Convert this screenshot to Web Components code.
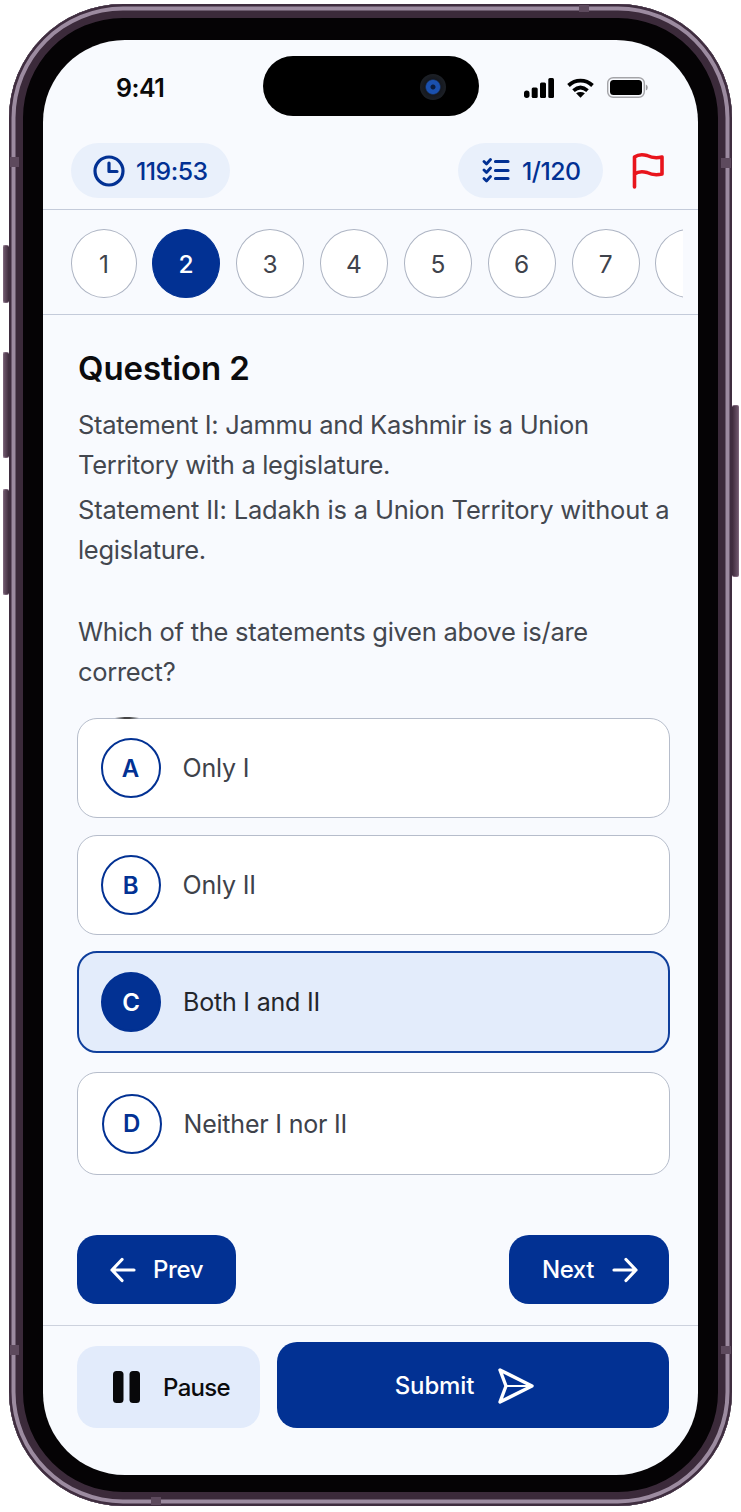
<!DOCTYPE html>
<html><head><meta charset="utf-8"><style>
html,body{margin:0;background:#fff;font-family:Inter,"Liberation Sans",sans-serif}
body{width:741px;height:1512px;overflow:hidden}
</style></head><body>
<phone-frame>
  <status-bar></status-bar>
  <quiz-header></quiz-header>
  <question-strip></question-strip>
  <question-body>
    <h-q slot="title">Question 2</h-q>
    <p-line slot="s1">Statement I: Jammu and Kashmir is a Union Territory with a legislature.</p-line>
    <p-line slot="s2" style="margin-top:5px"><span style="letter-spacing:-.17px">Statement II: Ladakh is a Union Territory without a</span> legislature.</p-line>
    <p-line slot="s3" style="margin-top:42px"><span style="letter-spacing:-.27px">Which of the statements given above is/are</span> correct?</p-line>
  </question-body>
  <option-list>
    <quiz-option letter="A" h="100">Only I</quiz-option>
    <quiz-option letter="B" h="100" style="margin-top:17px">Only II</quiz-option>
    <quiz-option letter="C" h="102" selected style="margin-top:16px">Both I and II</quiz-option>
    <quiz-option letter="D" h="103" style="margin-top:19px;--pad:23.500px">Neither I nor II</quiz-option>
  </option-list>
  <nav-row></nav-row>
  <action-bar></action-bar>
</phone-frame>
<script>
function el(name,css,html,init){
  customElements.define(name,class extends HTMLElement{
    constructor(){super();this.attachShadow({mode:'open'}).innerHTML='<style>'+css+'</style>'+(typeof html==='function'?html(this):html);}
    connectedCallback(){init&&init(this)}
  });
}
const BLUE='#023193';
el('phone-frame',`
:host{display:block;position:absolute;left:0;top:0;width:741px;height:1512px}
.frame{position:absolute;left:9px;top:4px;width:723px;height:1502px;box-sizing:border-box;border-radius:114px;background:#050305;
  box-shadow:inset 0 0 0 2.500px #3f2d3f,inset 0 0 0 6.500px #9c8ba0,inset 0 0 0 14px #3b2a3a;padding:36px 34px 31px 34px}
.screen{position:relative;width:655px;height:1435px;border-radius:82px;background:#f8fafe;overflow:hidden;display:flex;flex-direction:column}
.btn{position:absolute;box-sizing:border-box;background:linear-gradient(90deg,#6b5469,#3d2a3b);border-radius:2px;border:1px solid #7b6479;border-right:0}
.mark{position:absolute;background:#5d4a5d}
.island{position:absolute;left:220px;top:16px;width:216px;height:60px;border-radius:30px;background:#000}
.cam{position:absolute;left:420px;top:74px;width:26px;height:26px;border-radius:50%;background:radial-gradient(circle at 50% 50%,#0a1c40 0 2px,#1a50ae 3px 6.500px,#15181f 8px,#1c2026 13px)}
.smudge{position:absolute;left:115px;top:717px;width:24px;height:1.500px;background:linear-gradient(90deg,transparent,#444 40%,#444 60%,transparent)}
`,`
<div class="btn" style="left:3px;top:245px;width:6px;height:58px"></div>
<div class="btn" style="left:3px;top:352px;width:6px;height:106px"></div>
<div class="btn" style="left:3px;top:489px;width:6px;height:106px"></div>
<div class="btn" style="left:732px;top:405px;width:7px;height:172px;transform:scaleX(-1)"></div>
<div class="frame"><div class="screen">
<slot></slot>
<div class="island"></div>
</div></div>
<div class="mark" style="left:10px;top:157px;width:9px;height:10px"></div>
<div class="mark" style="left:10px;top:1345px;width:9px;height:10px"></div>
<div class="mark" style="left:721px;top:158px;width:10px;height:10px"></div>
<div class="mark" style="left:721px;top:1346px;width:10px;height:8px"></div>
<div class="mark" style="left:579px;top:5px;width:10px;height:7px"></div>
<div class="mark" style="left:151px;top:1497px;width:10px;height:8px"></div>
<div class="cam"></div>
<div class="smudge"></div>
`);
el('status-bar',`
:host{display:block;height:103px;flex:none;box-sizing:border-box;position:relative}
.row{display:flex;align-items:center;height:95px;padding:0 50px 0 73px}
.t{font:600 25px Inter,sans-serif;color:#0a0a0a;letter-spacing:-.5px}
.r{margin-left:auto;display:flex;align-items:center;gap:13px}
svg{display:block}
`,`<div class="row"><span class="t">9:41</span><div class="r">
<svg width="30" height="20" viewBox="0 0 30 20"><rect x="0" y="12.500" width="5.500" height="7.500" rx="2.700"/><rect x="7.700" y="9.500" width="6" height="10.500" rx="1.500"/><rect x="16" y="4.500" width="6" height="15.500" rx="1.500"/><rect x="24.300" y="0" width="5.700" height="20" rx="1.500"/></svg>
<svg width="27" height="20" viewBox="0 0 27 20" fill="none" stroke="#000" stroke-width="3.800"><path d="M1.500 7.500C8.500 1 18.500 1 25.500 7.500"/><path d="M6.500 12.600c4.500-4 9.500-4 14 0"/><path d="M13.500 19.800l-4.400-4.500c2.600-1.800 6.200-1.800 8.800 0z" fill="#000" stroke="none"/></svg>
<svg width="41" height="21" viewBox="0 0 41 21"><rect x=".7" y=".7" width="36.600" height="19.600" rx="5.500" fill="none" stroke="#a4a4a8" stroke-width="1.400"/><rect x="3" y="3" width="32" height="15" rx="3.500" fill="#000"/><path d="M38.800 7.500v6c1.300-.5 1.900-1.500 1.900-3s-.6-2.500-1.900-3z" fill="#9a9a9e"/></svg>
</div></div>`);
el('quiz-header',`
:host{display:flex;align-items:flex-start;height:67px;flex:none;box-sizing:border-box;border-bottom:1px solid #c4cbda;padding:0 31px 0 28px}
.pill{display:flex;align-items:center;height:55px;border-radius:28px;background:#e9f0fb;color:${BLUE};font:500 24.800px Inter,sans-serif;letter-spacing:-.5px}
.a{width:159px;padding-left:22px;gap:11px;box-sizing:border-box}
.b{width:145px;margin-left:auto;padding-left:24px;gap:12px;box-sizing:border-box}
svg{display:block;flex:none}
.flag{margin-left:28px;margin-top:9px}
`,`<div class="pill a"><svg width="32" height="32" viewBox="0 0 32 32" fill="none" stroke="${BLUE}" stroke-width="3.200" stroke-linecap="round" stroke-linejoin="round"><circle cx="16" cy="16" r="14"/><path d="M16 8v8.500h8"/></svg><span>119:53</span></div>
<div class="pill b"><svg width="28" height="26" viewBox="0 0 28 26" fill="none" stroke="${BLUE}" stroke-width="2.800" stroke-linecap="round" stroke-linejoin="round"><path d="M2 3.500l2.500 2.500 4-4.500M2 12l2.500 2.500 4-4.500M2 20.500l2.500 2.500 4-4.500"/><path d="M13.500 3.500H26M13.500 12.500H26M13.500 20.500H26" stroke-width="3.200"/></svg><span>1/120</span></div>
<svg class="flag" width="36" height="38" viewBox="0 0 36 38" fill="none" stroke="#e8141c" stroke-width="3.600" stroke-linecap="round" stroke-linejoin="round"><path d="M3.500 35V5C7 2.500 12 2.500 16 3.500c4 2 9 3 15 1.500V22c-6 1.500-11 .5-15-1.500-4-1-9-1-12.500 1.500"/></svg>`);
el('question-strip',`
:host{display:block;height:105px;flex:none;box-sizing:border-box;border-bottom:1px solid #c4cbda;padding:19px 15px 0 28px}
.in{display:flex;gap:15.800px;overflow:hidden}
.c{flex:none;width:68.100px;height:69px;box-sizing:border-box;border-radius:50%;border:1.500px solid #adb4c3;background:#fff;display:flex;align-items:center;justify-content:center;font:400 24.500px Inter,sans-serif;color:#3f434c}
.c:first-child{width:66px;margin-right:-.7px}
.c.on{background:${BLUE};border-color:${BLUE};color:#fff;font-weight:500}
`,`<div class="in">${[1,2,3,4,5,6,7,8].map(n=>`<div class="c${n==2?' on':''}">${n==8?'':n}</div>`).join('')}</div>`);
el('h-q',`:host{display:block;font:600 33px/42px Inter,sans-serif;color:#0b0b0d;letter-spacing:-.1px;margin-bottom:16px}`,`<slot></slot>`);
el('p-line',`:host{display:block;font:400 25.500px/40px Inter,sans-serif;color:#43474f;letter-spacing:-.31px}`,`<slot></slot>`);
el('question-body',`:host{display:block;flex:none;box-sizing:border-box;padding:32px 26px 0 35px}`,`<slot name="title"></slot><slot name="s1"></slot><slot name="s2"></slot><slot name="s3"></slot>`);
el('option-list',`:host{display:block;flex:none;margin:26px 28px 0 34px}`,`<slot></slot>`);
el('quiz-option',`
:host{display:block}
.o{display:flex;align-items:center;box-sizing:border-box;border:1.500px solid #b6bdcb;border-radius:20px;background:#fff;padding-left:var(--pad,22.500px);gap:22px;font:400 25px Inter,sans-serif;color:#3e424a;letter-spacing:-.2px}
.l{flex:none;width:60px;height:60px;box-sizing:border-box;border-radius:50%;border:2px solid ${BLUE};display:flex;align-items:center;justify-content:center;color:${BLUE};font:600 24px Inter,sans-serif}
.s{background:#e3ecfb;border-color:#0f3f9c;color:#23262c;border-width:2px;padding-left:22px}
.s .l{background:${BLUE};color:#fff}
`,h=>`<div class="o${h.hasAttribute('selected')?' s':''}" style="height:${h.getAttribute('h')}px"><span class="l">${h.getAttribute('letter')}</span><span><slot></slot></span></div>`);
el('nav-row',`
:host{display:flex;justify-content:space-between;flex:none;margin:60px 29px 0 34px}
.b{display:flex;align-items:center;justify-content:center;gap:17px;width:159px;height:69px;border-radius:20px;background:${BLUE};color:#fff;font:500 24px Inter,sans-serif;letter-spacing:-.4px}
.n{width:160px;padding-left:2px;box-sizing:border-box;gap:18px}
svg{display:block}
`,`<div class="b"><svg width="26" height="26" viewBox="0 0 26 26" fill="none" stroke="#fff" stroke-width="3.200" stroke-linecap="round" stroke-linejoin="round"><path d="M24 13H2M12 2.500L2 13l10 10.500"/></svg><span>Prev</span></div>
<div class="b n"><span>Next</span><svg width="26" height="26" viewBox="0 0 26 26" fill="none" stroke="#fff" stroke-width="3.200" stroke-linecap="round" stroke-linejoin="round"><path d="M2 13h22M14 2.500L24 13 14 23.500"/></svg></div>`);
el('action-bar',`
:host{display:flex;align-items:flex-end;gap:17px;flex:none;margin-top:21px;border-top:1px solid #cdd2de;padding:16px 29px 0 34px}
.p{flex:none;width:183px;height:82px;box-sizing:border-box;padding-left:6px;border-radius:20px;background:#e2ebfb;display:flex;align-items:center;justify-content:center;gap:23px;color:#0b0b0d;font:500 24px Inter,sans-serif;letter-spacing:-.7px}
.s{flex:1;height:86px;box-sizing:border-box;padding:1px 17px 0 0;border-radius:20px;background:${BLUE};display:flex;align-items:center;justify-content:center;gap:24px;color:#fff;font:500 24px Inter,sans-serif;letter-spacing:-.1px}
svg{display:block}
`,`<div class="p"><svg width="27" height="32" viewBox="0 0 27 32"><rect x="0" y="0" width="10.500" height="32" rx="3.500" fill="#08080a"/><rect x="16.500" y="0" width="10.500" height="32" rx="3.500" fill="#08080a"/></svg><span>Pause</span></div>
<div class="s"><span>Submit</span><svg width="36" height="36" viewBox="0 0 36 36" fill="none" stroke="#fff" stroke-width="3.400" stroke-linecap="round" stroke-linejoin="round"><path d="M2 2L34 18 2 34 8 18z"/><path d="M8 18h26" stroke-width="2"/></svg></div>`);
</script>
</body></html>
